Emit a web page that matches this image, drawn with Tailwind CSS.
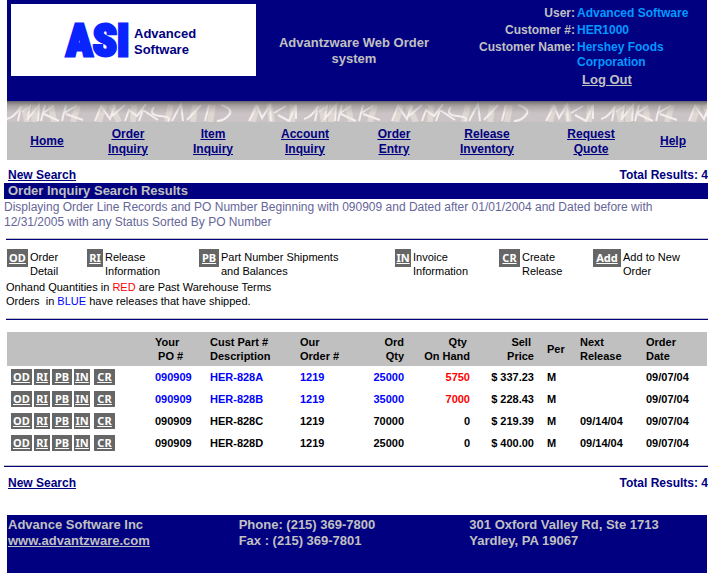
<!DOCTYPE html>
<html lang="en">
<head>
<meta charset="utf-8">
<title>Order Inquiry Search Results</title>
<script src="https://cdn.jsdelivr.net/npm/@tailwindcss/browser@4"></script>
</head>
<body class="bg-white font-['Liberation_Sans',Arial,sans-serif] text-xs text-black overflow-x-hidden">
<header class="ml-[7px] mr-px">
  <div class="flex h-[101px] bg-[#000080] font-bold text-[#c0c0c0]">
    <div class="mt-1 ml-1 flex h-[72px] w-[245px] shrink-0 items-center bg-white pl-[55px] gap-2">
      <span class="w-[60px] pt-[2px] text-[44px] leading-[48px] font-black whitespace-nowrap font-['Roboto_Condensed',Roboto,sans-serif] text-[#0a24ff] [-webkit-text-stroke:3px_#0a24ff]">ASI</span>
      <span class="pt-[3px] text-[13px] leading-4 text-[#000080]">Advanced<br>Software</span>
    </div>
    <h1 class="w-[196px] shrink-0 px-4 pt-[35px] text-center text-[13px] leading-4">Advantzware Web Order system</h1>
    <div class="grow pt-[6px] pl-[26px]">
      <dl class="grid grid-cols-[97px_1fr] gap-x-[2px] gap-y-[2px] leading-[15px]">
        <dt class="text-right whitespace-nowrap">User:</dt><dd class="text-[#0099ff]">Advanced Software</dd>
        <dt class="text-right whitespace-nowrap">Customer #:</dt><dd class="text-[#0099ff]">HER1000</dd>
        <dt class="text-right whitespace-nowrap">Customer Name:</dt><dd class="text-[#0099ff]">Hershey Foods<br>Corporation</dd>
      </dl>
      <div class="pt-[2px] pl-[104px]"><a href="#" class="text-[13px] leading-4 underline">Log Out</a></div>
    </div>
  </div>
  <svg class="block h-[21px] w-full" aria-hidden="true">
    <defs>
      <linearGradient id="shade" x1="0" y1="0" x2="0" y2="1">
        <stop offset="0" stop-color="#504c50" stop-opacity=".8"/>
        <stop offset=".2" stop-color="#706c6c" stop-opacity=".45"/>
        <stop offset=".6" stop-color="#908888" stop-opacity="0"/>
      </linearGradient>
      <filter id="soft"><feGaussianBlur stdDeviation=".7"/></filter>
      <pattern id="marble" width="297" height="21" patternUnits="userSpaceOnUse">
        <rect width="297" height="21" fill="#cbc4c6"/>
        <g fill="none" stroke="#e4dcd5" stroke-width="6" filter="url(#soft)" opacity=".8">
          <path d="M17 4L20 21M28 4L27 21M44 4L47 21M66 21L71 4M92 21L97 4M104 4L112 21M127 4L126 21M160 21L164 4M188 4L186 21M203 21L206 4M246 21L250 4M262 3L265 21M286 4L285 21"/>
        </g>
        <g fill="none" stroke="#f2efed" stroke-width="2" filter="url(#soft)">
          <path d="M0 18Q8 16 14 5L11 20M15 11L23 5L21 17M20 19L32 4L31 20M38 4L34 20M36 12L47 5M37 13L52 20M59 4L55 20M57 12L69 5M59 13L76 19M88 20L94 5L103 18L108 4M105 15L118 4M118 20L122 9L130 15L139 3M132 20L136 9L151 19M147 6Q141 14 153 15T161 20M165 20L174 3L176 20M180 19L194 4M198 20L202 4M214 4Q227 8 222 14T210 20M242 20L250 5L255 17L263 4L264 20M267 12L279 5M271 14L282 20L289 4L289 18"/>
        </g>
      </pattern>
    </defs>
    <rect width="100%" height="21" fill="url(#marble)"/>
    <rect width="100%" height="21" fill="url(#shade)"/>
  </svg>
  <nav class="grid h-[38px] grid-cols-[80fr_82fr_88fr_96fr_82fr_104fr_104fr_60fr] items-center bg-[#c0c0c0] pt-px pr-1 text-center leading-[15px] font-bold text-[#000080] underline">
    <a href="#">Home</a>
    <a href="#">Order<br>Inquiry</a>
    <a href="#">Item<br>Inquiry</a>
    <a href="#">Account<br>Inquiry</a>
    <a href="#">Order<br>Entry</a>
    <a href="#">Release<br>Inventory</a>
    <a href="#">Request<br>Quote</a>
    <a href="#">Help</a>
  </nav>
</header>
<main>
  <div class="flex justify-between pt-[7px] pl-2 leading-4 font-bold text-[#000080]">
    <a href="#" class="underline">New Search</a><span>Total Results: 4</span>
  </div>
  <h2 class="ml-1 bg-[#000080] pl-1 text-[13px] leading-4 font-bold text-[#c0c0c0]">Order Inquiry Search Results</h2>
  <p class="ml-1 pt-px leading-[15px] text-[#666699]">Displaying Order Line Records and PO Number Beginning with 090909 and Dated after 01/01/2004 and Dated before with 12/31/2005 with any Status Sorted By PO Number</p>
  <hr class="mt-2 ml-[6px] h-[2px] border-t border-b border-t-[#c0c0c0] border-b-[#000080]">
  <section class="mt-[9px] ml-[6px] text-[11px] leading-[14px]">
    <ul class="grid grid-cols-[80fr_112fr_196fr_104fr_94fr_115fr] pl-px">
      <li class="flex gap-[2px]"><a href="#" class="h-[18px] w-[21px] bg-[#666666] text-center leading-[17px] font-['Noto_Sans',sans-serif] font-bold text-white underline">OD</a><span class="pt-px">Order<br>Detail</span></li>
      <li class="flex gap-[2px]"><a href="#" class="h-[18px] w-4 bg-[#666666] text-center leading-[17px] font-['Noto_Sans',sans-serif] font-bold text-white underline">RI</a><span class="pt-px">Release<br>Information</span></li>
      <li class="flex gap-[2px]"><a href="#" class="h-[18px] w-5 bg-[#666666] text-center leading-[17px] font-['Noto_Sans',sans-serif] font-bold text-white underline">PB</a><span class="pt-px">Part Number Shipments<br>and Balances</span></li>
      <li class="flex gap-[2px]"><a href="#" class="h-[18px] w-4 bg-[#666666] text-center leading-[17px] font-['Noto_Sans',sans-serif] font-bold text-white underline">IN</a><span class="pt-px">Invoice<br>Information</span></li>
      <li class="flex gap-[2px]"><a href="#" class="h-[18px] w-[21px] bg-[#666666] text-center leading-[17px] font-['Noto_Sans',sans-serif] font-bold text-white underline">CR</a><span class="pt-px">Create<br>Release</span></li>
      <li class="flex gap-[2px]"><a href="#" class="h-[18px] w-7 bg-[#666666] text-center leading-[17px] font-['Noto_Sans',sans-serif] font-bold text-white underline">Add</a><span class="pt-px">Add to New<br>Order</span></li>
    </ul>
    <p class="mt-[2px]">Onhand Quantities in <span class="text-[#ff0000]">RED</span> are Past Warehouse Terms<br>Orders&nbsp; in <span class="text-[#0000ff]">BLUE</span> have releases that have shipped.</p>
  </section>
  <hr class="mt-[10px] ml-[6px] h-[2px] border-t border-b border-t-[#c0c0c0] border-b-[#000080]">
  <div class="mt-3 mr-px ml-[7px]">
    <table class="w-full table-fixed text-left text-[11px] leading-[14px] font-bold">
      <colgroup>
        <col class="w-[148px]"><col class="w-[55px]"><col class="w-[90px]"><col class="w-[55px]"><col class="w-[49px]"><col class="w-[66px]"><col class="w-[64px]"><col class="w-[46px]"><col class="w-[66px]"><col class="w-[61px]">
      </colgroup>
      <thead>
        <tr class="h-[34px] bg-[#c0c0c0]">
          <th></th>
          <th>Your<br>&nbsp;PO #</th>
          <th>Cust Part #<br>Description</th>
          <th>Our<br>Order #</th>
          <th class="text-right">Ord<br>Qty</th>
          <th class="text-right">Qty&nbsp;<br>On Hand</th>
          <th class="text-right">Sell&nbsp;<br>Price</th>
          <th class="pl-[13px]">Per</th>
          <th>Next<br>Release</th>
          <th>Order<br>Date</th>
        </tr>
      </thead>
      <tbody>
        <tr class="h-[22px] text-[#0000ff]">
          <td><div class="flex gap-[2px] pl-1 text-center leading-4 font-['Noto_Sans',sans-serif] text-white underline"><a href="#" class="w-[21px] bg-[#666666]">OD</a><a href="#" class="w-4 bg-[#666666]">RI</a><a href="#" class="w-5 bg-[#666666]">PB</a><a href="#" class="mr-[2px] w-4 bg-[#666666]">IN</a><a href="#" class="w-[21px] bg-[#666666]">CR</a></div></td>
          <td>090909</td><td>HER-828A</td><td>1219</td>
          <td class="text-right">25000</td><td class="text-right text-[#ff0000]">5750</td>
          <td class="text-right text-black">$ 337.23</td><td class="pl-[13px] text-black">M</td><td></td><td class="text-black">09/07/04</td>
        </tr>
        <tr class="h-[22px] text-[#0000ff]">
          <td><div class="flex gap-[2px] pl-1 text-center leading-4 font-['Noto_Sans',sans-serif] text-white underline"><a href="#" class="w-[21px] bg-[#666666]">OD</a><a href="#" class="w-4 bg-[#666666]">RI</a><a href="#" class="w-5 bg-[#666666]">PB</a><a href="#" class="mr-[2px] w-4 bg-[#666666]">IN</a><a href="#" class="w-[21px] bg-[#666666]">CR</a></div></td>
          <td>090909</td><td>HER-828B</td><td>1219</td>
          <td class="text-right">35000</td><td class="text-right text-[#ff0000]">7000</td>
          <td class="text-right text-black">$ 228.43</td><td class="pl-[13px] text-black">M</td><td></td><td class="text-black">09/07/04</td>
        </tr>
        <tr class="h-[22px]">
          <td><div class="flex gap-[2px] pl-1 text-center leading-4 font-['Noto_Sans',sans-serif] text-white underline"><a href="#" class="w-[21px] bg-[#666666]">OD</a><a href="#" class="w-4 bg-[#666666]">RI</a><a href="#" class="w-5 bg-[#666666]">PB</a><a href="#" class="mr-[2px] w-4 bg-[#666666]">IN</a><a href="#" class="w-[21px] bg-[#666666]">CR</a></div></td>
          <td>090909</td><td>HER-828C</td><td>1219</td>
          <td class="text-right">70000</td><td class="text-right">0</td>
          <td class="text-right">$ 219.39</td><td class="pl-[13px]">M</td><td>09/14/04</td><td>09/07/04</td>
        </tr>
        <tr class="h-[22px]">
          <td><div class="flex gap-[2px] pl-1 text-center leading-4 font-['Noto_Sans',sans-serif] text-white underline"><a href="#" class="w-[21px] bg-[#666666]">OD</a><a href="#" class="w-4 bg-[#666666]">RI</a><a href="#" class="w-5 bg-[#666666]">PB</a><a href="#" class="mr-[2px] w-4 bg-[#666666]">IN</a><a href="#" class="w-[21px] bg-[#666666]">CR</a></div></td>
          <td>090909</td><td>HER-828D</td><td>1219</td>
          <td class="text-right">25000</td><td class="text-right">0</td>
          <td class="text-right">$ 400.00</td><td class="pl-[13px]">M</td><td>09/14/04</td><td>09/07/04</td>
        </tr>
      </tbody>
    </table>
  </div>
  <hr class="mt-[11px] ml-1 h-[2px] border-t border-b border-t-[#c0c0c0] border-b-[#000080]">
  <div class="flex justify-between pt-2 pl-2 leading-4 font-bold text-[#000080]">
    <a href="#" class="underline">New Search</a><span>Total Results: 4</span>
  </div>
</main>
<footer class="mt-6 mr-px ml-[7px] grid h-[58px] grid-cols-[231fr_231fr_238fr] bg-[#000080] pt-[2px] pl-px text-[13px] leading-4 font-bold text-[#c0c0c0]">
  <div>Advance Software Inc<br><a href="#" class="underline">www.advantzware.com</a></div>
  <div>Phone: (215) 369-7800<br>Fax : (215) 369-7801</div>
  <div>301 Oxford Valley Rd, Ste 1713<br>Yardley, PA 19067</div>
</footer>
</body>
</html>
